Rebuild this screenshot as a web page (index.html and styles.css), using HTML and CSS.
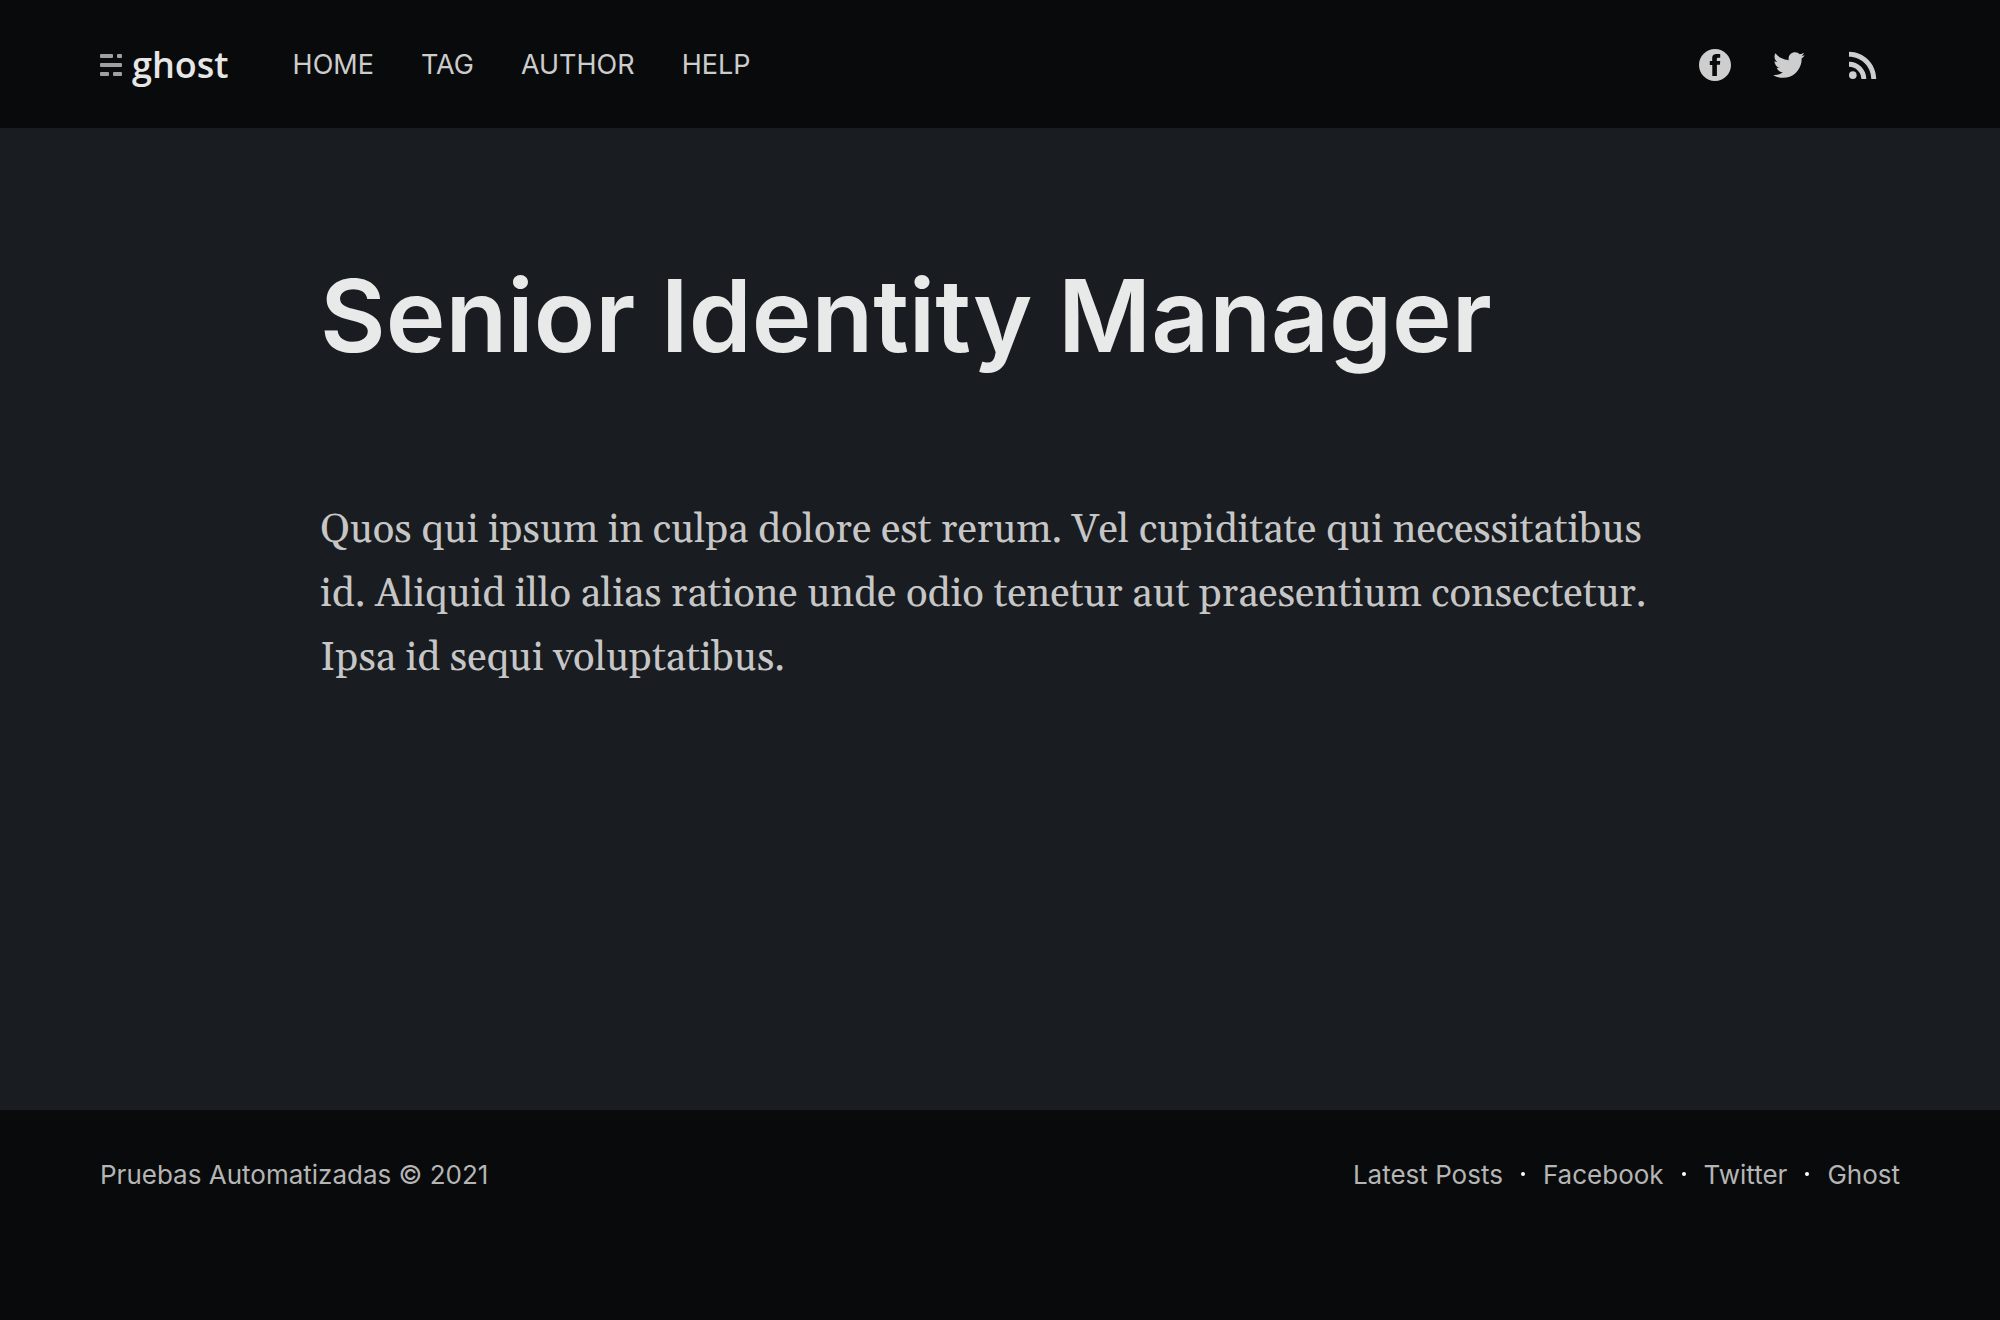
FILE: index.html
```html
<!DOCTYPE html>
<html lang="es">
<head>
<meta charset="utf-8">
<meta name="viewport" content="width=device-width, initial-scale=1">
<title>Senior Identity Manager</title>
<link rel="stylesheet" href="styles.css">
</head>
<body>
<header class="site-header">
  <nav class="site-nav" aria-label="Main">
    <a class="logo" href="#">
      <svg class="logo-mark" viewBox="0 0 22 22" aria-hidden="true">
        <rect x="0" y="0" width="13" height="4" rx="1"/>
        <rect x="17" y="0" width="5" height="4" rx="1"/>
        <rect x="0" y="9" width="22" height="4" rx="1"/>
        <rect x="0" y="18" width="9" height="4" rx="1"/>
        <rect x="13" y="18" width="9" height="4" rx="1"/>
      </svg>
      <span class="logo-name">ghost</span>
    </a>
    <ul class="nav-list">
      <li><a href="#">HOME</a></li>
      <li><a href="#">TAG</a></li>
      <li><a href="#">AUTHOR</a></li>
      <li><a href="#">HELP</a></li>
    </ul>
  </nav>
  <div class="social">
    <a class="social-link" href="#" aria-label="Facebook"><svg class="icon" viewBox="0 0 32 32" aria-hidden="true"><path d="M16 0c8.837 0 16 7.163 16 16s-7.163 16-16 16S0 24.837 0 16 7.163 0 16 0zm5.204 4.911h-3.546c-2.103 0-4.443.885-4.443 3.934.01 1.062 0 2.08 0 3.225h-2.433v3.872h2.509v11.147h4.61v-11.22h3.042l.275-3.81h-3.397s.007-1.695 0-2.187c0-1.205 1.253-1.136 1.329-1.136.596 0 1.756.002 2.054 0V4.911z"/></svg></a>
    <a class="social-link" href="#" aria-label="Twitter"><svg class="icon icon-medium" viewBox="0 0 32 32" aria-hidden="true"><path d="M30.063 7.313c-.813 1.125-1.75 2.125-2.875 2.938v.75c0 1.563-.188 3.125-.688 4.625a15.088 15.088 0 0 1-2.063 4.438c-.875 1.438-2 2.688-3.25 3.813a15.015 15.015 0 0 1-4.625 2.563c-1.813.688-3.75 1-5.75 1-3.25 0-6.188-.875-8.875-2.625.438.063.875.125 1.375.125 2.688 0 5.063-.875 7.188-2.5-1.25 0-2.375-.375-3.375-1.125s-1.688-1.688-2.063-2.875c.438.063.813.125 1.125.125.5 0 1-.063 1.5-.25-1.313-.25-2.438-.938-3.313-1.938a5.673 5.673 0 0 1-1.313-3.688v-.063c.813.438 1.688.688 2.625.688a5.228 5.228 0 0 1-1.875-2c-.5-.875-.688-1.813-.688-2.75 0-1.063.25-2.063.75-2.938 1.438 1.75 3.188 3.188 5.25 4.25s4.313 1.688 6.688 1.813a5.579 5.579 0 0 1 1.5-5.438c1.125-1.125 2.5-1.688 4.125-1.688s3.063.625 4.188 1.813a11.48 11.48 0 0 0 3.688-1.375c-.438 1.375-1.313 2.438-2.563 3.188 1.125-.125 2.188-.438 3.313-.875z"/></svg></a>
    <a class="social-link" href="#" aria-label="RSS"><svg class="icon icon-large" viewBox="0 0 24 24" aria-hidden="true"><circle cx="6.18" cy="17.82" r="2.18"/><path d="M4 4.44v2.83c7.03 0 12.73 5.7 12.73 12.73h2.83c0-8.59-6.97-15.56-15.56-15.56zm0 5.66v2.83c3.9 0 7.07 3.17 7.07 7.07h2.83c0-5.47-4.43-9.9-9.9-9.9z"/></svg></a>
  </div>
</header>
<main class="site-main">
  <article class="post">
    <h1 class="post-title">Senior Identity Manager</h1>
    <p class="post-text">Quos qui ipsum in culpa dolore est rerum. Vel cupiditate qui necessitatibus id. Aliquid illo alias ratione unde odio tenetur aut praesentium consectetur. Ipsa id sequi voluptatibus.</p>
  </article>
</main>
<footer class="site-footer">
  <div><a href="#">Pruebas Automatizadas</a> © 2021</div>
  <nav class="footer-nav" aria-label="Footer">
    <a href="#">Latest Posts</a>
    <a href="#">Facebook</a>
    <a href="#">Twitter</a>
    <a href="#">Ghost</a>
  </nav>
</footer>
</body>
</html>
```
FILE: styles.css
```css
* {
  box-sizing: border-box;
}

body {
  display: flex;
  flex-direction: column;
  min-height: 100vh;
  margin: 0;
  background: #090a0b;
  color: #cccccc;
  font-family: Inter, "Liberation Sans", sans-serif;
  font-size: 26px;
  line-height: 40px;
}

a {
  color: inherit;
  text-decoration: none;
}

.site-header {
  display: flex;
  align-items: center;
  justify-content: space-between;
  min-height: 128px;
  padding: 2px 5% 0;
}

.site-nav,
.logo,
.nav-list,
.social {
  display: flex;
  align-items: center;
}

.site-nav {
  gap: 64px;
}

.logo {
  gap: 10px;
}

.logo-mark {
  width: 22px;
  height: 22px;
  fill: #a0a0a1;
}

.logo-name {
  color: #e6e6e6;
  font-family: "Open Sans", "Noto Sans", sans-serif;
  font-size: 36px;
  font-weight: 600;
}

.nav-list {
  gap: 47px;
  margin: 0;
  padding: 0;
  font-size: 27px;
  list-style: none;
}

.social {
  gap: 32px;
  padding-right: 16px;
}

.social-link {
  display: flex;
  align-items: center;
  justify-content: center;
  width: 42px;
  height: 42px;
}

.icon {
  width: 32px;
  height: 32px;
  fill: #cecece;
}

.icon-medium {
  width: 36px;
  height: 36px;
}

.icon-large {
  width: 42px;
  height: 42px;
}

.site-main {
  flex: 1;
  padding: 123px 5% 160px;
  background: #191c20;
}

.post {
  max-width: 1360px;
  margin: 0 auto;
}

.post-title {
  margin: 0 0 120px;
  color: #e8eae9;
  font-size: 101px;
  font-weight: 600;
  line-height: 128px;
}

.post-text {
  margin: 0;
  color: #c6c6c6;
  font-family: Georgia, Gelasio, "Liberation Serif", serif;
  font-size: 40px;
  line-height: 64px;
}

.site-footer {
  display: flex;
  justify-content: space-between;
  min-height: 210px;
  padding: 45px 5%;
  color: #b5b5b5;
}

.footer-nav {
  display: flex;
}

.footer-nav a + a::before {
  content: "";
  display: inline-block;
  width: 4px;
  height: 4px;
  margin: 0 18px;
  border-radius: 50%;
  background: #ffffff;
  vertical-align: 8px;
}
```
